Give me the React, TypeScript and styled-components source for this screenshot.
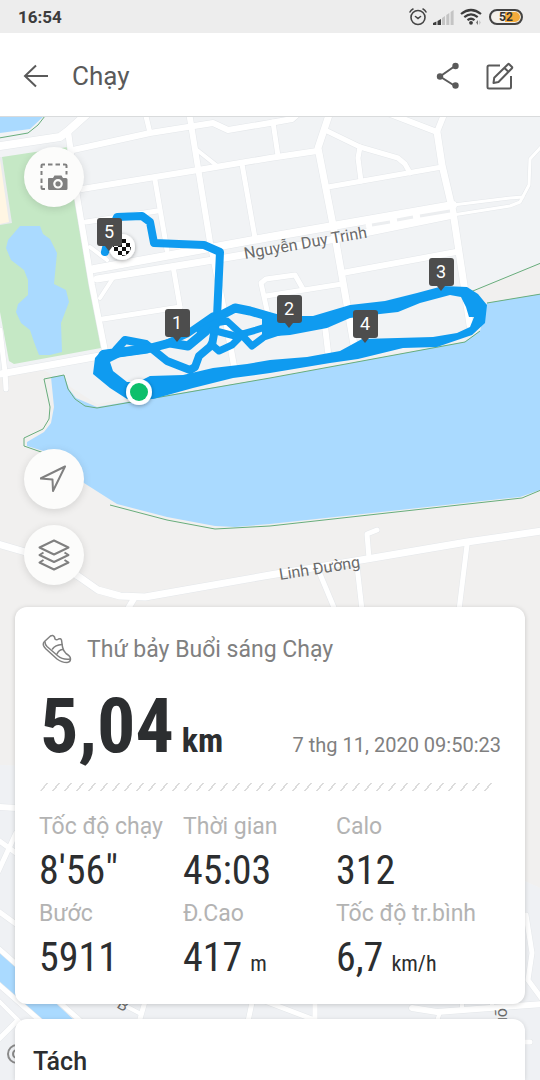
import React from "react";
import styled, { createGlobalStyle } from "styled-components";

const GlobalStyle = createGlobalStyle`
  *, *::before, *::after { box-sizing: border-box; }
  body {
    margin: 0;
    background: #eef0f3;
    color: #2c2e30;
    font-family: Roboto, "Noto Sans", sans-serif;
  }
`;

const condensed = `"Roboto Condensed", "Liberation Sans Narrow", Roboto, sans-serif`;

const Page = styled.div`
  display: flex;
  flex-direction: column;
  min-height: 100vh;
`;

const StatusBar = styled.div`
  display: flex;
  align-items: center;
  justify-content: space-between;
  height: 33px;
  padding: 0 17px 0 18px;
  background: #ededed;
  color: #3c3c3c;
`;

const Clock = styled.time`
  font-size: 17px;
  font-weight: 700;
  line-height: 20px;
`;

const StatusIcons = styled.div`
  display: flex;
  align-items: center;
  gap: 6px;

  svg { display: block; }
`;

const Battery = styled.span`
  width: 34px;
  height: 16px;
  border: 2px solid #444;
  border-radius: 8px;
  background: linear-gradient(90deg, #f5f1ea 0 14px, #f4ab3c 14px);
  box-shadow: inset 0 0 0 1px #ededed;
  color: #333;
  font-size: 12px;
  font-weight: 700;
  line-height: 12px;
  text-align: center;
`;

const AppBar = styled.header`
  display: flex;
  align-items: center;
  height: 84px;
  padding: 2px 24px 0 20px;
  border-bottom: 1px solid #d9dbdc;
  background: #fff;
`;

const Title = styled.h1`
  flex: 1;
  margin: 0 0 0 20px;
  color: #5a5a5a;
  font-size: 26px;
  font-weight: 400;
  line-height: 32px;
`;

const IconButton = styled.button`
  display: grid;
  place-items: center;
  width: 32px;
  height: 32px;
  padding: 0;
  border: 0;
  background: none;
  color: #5a5a5a;

  & + & { margin-left: 20px; }
`;

const Activity = styled.main`
  position: relative;
  display: flex;
  flex: 1;
  flex-direction: column;
  overflow: hidden;
`;

const MapCanvas = styled.svg`
  position: absolute;
  inset: 0;
  width: 100%;
  height: 100%;
`;

const MapTools = styled.div`
  position: relative;
  display: flex;
  flex-direction: column;
  align-items: flex-start;
  justify-content: space-between;
  height: 490px;
  padding: 30px 24px 22px;
`;

const ToolGroup = styled.div`
  display: flex;
  flex-direction: column;
  gap: 16px;
`;

const RoundButton = styled.button`
  display: grid;
  place-items: center;
  width: 60px;
  height: 60px;
  padding: 0;
  border: 0;
  border-radius: 50%;
  background: #fcfcfb;
  box-shadow: 0 2px 8px rgba(0, 0, 0, 0.12);
  color: #808080;
`;

const Cards = styled.div`
  position: relative;
  display: flex;
  flex: 1;
  flex-direction: column;
  gap: 15px;
  padding: 0 15px;
`;

const SummaryCard = styled.section`
  padding: 24px 24px 19px;
  border-radius: 12px;
  background: #fff;
  box-shadow: 0 1px 5px rgba(0, 0, 0, 0.18);
`;

const SplitsCard = styled.section`
  flex: 1;
  padding: 27px 18px 0;
  border-radius: 12px 12px 0 0;
  background: #fff;
  box-shadow: 0 1px 5px rgba(0, 0, 0, 0.14);
`;

const SplitsTitle = styled.h2`
  margin: 0;
  font-size: 25px;
  font-weight: 500;
  line-height: 32px;
`;

const WorkoutName = styled.h2`
  display: flex;
  align-items: center;
  gap: 15px;
  height: 36px;
  margin: 0 0 15px 3px;
  color: #808080;
  font-size: 23px;
  font-weight: 400;
`;

const DistanceRow = styled.div`
  display: flex;
  align-items: baseline;
  justify-content: space-between;
  height: 88px;
`;

const Distance = styled.p`
  margin: 0 0 0 1px;
  font-family: ${condensed};
  font-size: 76px;
  font-weight: 700;
  line-height: 88px;
`;

const DistanceUnit = styled.span`
  margin-left: 8px;
  font-size: 34px;
  line-height: 40px;
`;

const StartDate = styled.time`
  color: #808080;
  font-size: 20px;
  line-height: 24px;
`;

const Stripes = styled.hr`
  height: 8px;
  margin: 13px 4px 20px;
  border: 0;
  background: repeating-linear-gradient(90deg, #dcdcdc 0 2px, transparent 2px 12px);
  transform: skewX(-37deg);
`;

const Stats = styled.dl`
  display: grid;
  grid-template-columns: 48fr 51fr 55fr;
  margin: 0;
`;

const StatLabel = styled.dt`
  color: #b3b3b3;
  font-size: 23px;
  line-height: 32px;
  white-space: nowrap;
`;

const StatValue = styled.dd`
  margin: 0;
  font-family: ${condensed};
  font-size: 40px;
  line-height: 55px;
  white-space: nowrap;
`;

const StatUnit = styled.span`
  margin-left: 8px;
  font-size: 22px;
  line-height: 24px;
`;

const stats = [
  { label: "Tốc độ chạy", value: "8'56\"" },
  { label: "Thời gian", value: "45:03" },
  { label: "Calo", value: "312" },
  { label: "Bước", value: "5911" },
  { label: "Đ.Cao", value: "417", unit: "m" },
  { label: "Tốc độ tr.bình", value: "6,7", unit: "km/h" },
];

const streets: [number, string][] = [
  [8, "M0 146 L60 137 L68 131 L88 113"],
  [6, "M68 131 L76 190 L92 285 L106 356"],
  [6, "M73 150 L150 133 L213 123 L228 130 L270 123 L292 119 L300 112"],
  [5, "M145 112 L150 133"],
  [6, "M189 112 L210 242 L222 300 L234 366"],
  [4, "M197 150 L216 165"],
  [6, "M82 189 L198 170 L270 158 L317 151"],
  [5, "M155 180 L167 250"],
  [5, "M242 164 L255 238"],
  [5, "M86 222 L157 211"],
  [8, "M94 269 L270 237 L453 205"],
  [7, "M97 279 L213 260 L330 240 L453 215"],
  [4, "M90 247 L107 260"],
  [3, "M453 205 L510 198 L523 197"],
  [3, "M453 215 L510 206 L520 202 L529 185 L530 159 L541 147"],
  [7, "M330 112 L318 148 L333 225 L343 282 L354 345"],
  [5, "M273 122 L278 156"],
  [5, "M325 130 L360 147 L398 158 L405 164 L410 173"],
  [5, "M360 147 L358 158 L361 181"],
  [5, "M328 187 L442 167"],
  [6, "M385 112 L437 132 L445 112"],
  [7, "M437 132 L442 165 L453 212 L464 285 L470 325"],
  [6, "M342 273 L456 252"],
  [5, "M268 315 L261 283 L266 279 L295 275 L303 289"],
  [5, "M266 296 L342 284"],
  [5, "M173 266 L180 307"],
  [5, "M103 319 L180 307"],
  [4, "M113 278 L100 298"],
  [6, "M325 326 L328 352"],
  [7, "M0 374 L105 355"],
  [5, "M0 330 L5 372 L6 389"],
  [7, "M-2 544 L22 551 L54 560 L78 576 L98 590 L120 596 L145 597 L270 575 L367 559 L467 542 L542 531"],
  [5, "M369 558 L367 534 L377 530"],
  [5, "M320 574 L335 610"],
  [5, "M357 566 L362 610"],
  [5, "M467 545 L459 610"],
  [6, "M135 597 L126 612"],
  [6, "M-2 807 L16 808"],
  [5, "M-2 840 L16 853"],
  [5, "M-2 872 L16 833"],
  [5, "M-2 911 L16 924"],
  [5, "M-2 948 L84 1024"],
  [5, "M-2 984 L46 1026"],
  [4, "M-2 1000 L24 1026"],
  [5, "M-2 1040 L16 1022"],
  [5, "M146 998 L138 1026"],
  [4, "M118 1002 L141 1014"],
  [5, "M253 998 L247 1026"],
  [5, "M262 1000 L312 1019"],
  [5, "M315 998 L315 1026"],
  [6, "M412 1008 L437 1012 L542 1004"],
  [4, "M440 1012 L436 1024"],
  [4, "M462 998 L462 1010"],
  [4, "M492 998 L492 1008"],
  [5, "M526 915 L532 953 L528 980 L542 999"],
  [5, "M520 1042 L530 1042"],
];

const shoreline = [
  "M24 446 L24 438 L43 429 L49 419 L50 407 L44 379 L64 375 L68 389 L75 399 L85 406 L97 408 L270 378 L465 342 L480 331",
  "M24 446 L44 453",
  "M110 505 L167 520 L215 529 L270 526 L522 498 L541 490",
  "M468 293 L541 263",
  "M487 303 L541 294",
  "M-1 138 L28 133 L38 125 L45 116",
];

const routeLines: [number, string][] = [
  [8, "M105 252 L109 236 L117 217 L142 216 L150 222 L154 243 L204 245 L220 252 L217 317 L212 345 L199 356 L195 367 L190 370 L167 361 L146 344 L125 340 L116 350"],
  [9, "M103 355 L147 349 L170 343 L188 346 L206 331 L216 318 L235 308 L250 311 L278 319"],
  [7, "M165 344 L187 334 L213 316"],
  [7, "M200 331 L215 323 L227 321 L239 332 L252 346 L264 337 L285 330"],
  [7, "M212 330 L235 336 L256 330 L285 321"],
  [7, "M211 344 L219 351 L232 345 L243 334"],
];

const pins = [
  { n: 1, x: 177, y: 342 },
  { n: 2, x: 289, y: 328 },
  { n: 3, x: 441, y: 291 },
  { n: 4, x: 365, y: 343 },
  { n: 5, x: 109, y: 251 },
];

function RouteMap() {
  return (
    <MapCanvas viewBox="0 117 540 963" preserveAspectRatio="xMidYMin slice" role="img" aria-label="Run route map">
      <defs>
        <pattern id="checker" width="8" height="8" x="122" y="247" patternUnits="userSpaceOnUse">
          <rect width="8" height="8" fill="#fff" />
          <path d="M0 0h4v4h-4z M4 4h4v4h-4z" fill="#111" />
        </pattern>
        <filter id="lift" x="-50%" y="-50%" width="200%" height="200%">
          <feDropShadow dx="0" dy="1" stdDeviation="2" floodOpacity="0.35" />
        </filter>
      </defs>

      <rect y="117" width="540" height="963" fill="#f1f3f5" />
      <path d="M0 376 L44 370 L97 404 L465 340 L470 292 L540 263 V888 L300 780 L0 765z" fill="#f1f0ef" />
      <path d="M0 765 L300 780 L540 888 V1080 H0z" fill="#eff1f4" />
      <path d="M0 157 L2 157 L14 226 L0 226z" fill="#e9ebed" />
      <path d="M0 160 L9 222 L0 224z" fill="#fff6e3" />
      <path d="M2 157 L68 147 L76 190 L101 348 L14 364 L9 361 L0 312 V225 L12 223z" fill="#c5e8c5" />
      <path
        d="M20 226 L40 226 L43 234 L50 239 L57 253 L54 284 L66 290 L69 302 L61 323 L62 352 L50 355 L39 355 L34 342 L30 330 L21 323 L16 312 L18 304 L28 295 L28 280 L24 270 L11 260 L6 248 L8 240z"
        fill="#aadaff"
      />
      <path d="M0 116 H44 L30 129 L0 133z" fill="#aadaff" />
      <path
        d="M51 377 L64 375 L69 389 L76 398 L97 407 L270 378 L464 342 L480 331 L487 303 L540 294 V490 L520 497 L270 524 L235 527 L215 526 L167 517 L117 504 L84 483 L50 453 L27 446 V442 L44 432 L51 423 L54 407z"
        fill="#aadaff"
      />
      <path d="M0 951 L75 1021 H40 L0 986z" fill="#aadaff" />

      <g fill="none" stroke="#e4e7ea" strokeLinejoin="round" strokeLinecap="round">
        {streets.map(([w, d]) => <path key={d} d={d} strokeWidth={w + 1} />)}
      </g>
      <g fill="none" stroke="#fff" strokeLinejoin="round" strokeLinecap="round">
        {streets.map(([w, d]) => <path key={d} d={d} strokeWidth={w} />)}
        <path d="M366 226 L453 210" strokeWidth="14" strokeLinecap="butt" />
      </g>
      <path d="M372 225 L390 222 M397 220 L413 217 M420 216 L450 211" stroke="#eceef0" strokeWidth="3" />
      <g fill="none" stroke="#68ad7c" strokeWidth="1">
        {shoreline.map((d) => <path key={d} d={d} />)}
      </g>

      <g fill="#6b6b6b" fontSize="16">
        <text x="245" y="259" transform="rotate(-10 245 259)">Nguyễn Duy Trinh</text>
        <text x="280" y="580" transform="rotate(-9 280 580)">Linh Đường</text>
        <text x="116" y="1007" transform="rotate(32 116 1007)">B</text>
        <text x="507" y="1026" transform="rotate(-90 507 1026)">uõ</text>
      </g>
      <g fill="none" stroke="#8a8a8a" strokeWidth="2">
        <circle cx="17" cy="1054" r="9" />
        <circle cx="17" cy="1054" r="4" />
      </g>

      <g fill="none" stroke="#0f9bf0" strokeLinejoin="round" strokeLinecap="round">
        {routeLines.map(([w, d]) => <path key={d} d={d} strokeWidth={w} />)}
      </g>
      <path
        d="M262 314 L283 316 L313 316 L350 305 L385 301 L417 293 L443 286 L467 287 L478 294 L487 305 L485 323 L472 335 L437 347 L403 348 L358 359 L330 363 L270 373 L233 378 L193 388 L153 399 L127 399 L110 388 L93 374 L95 358 L102 350 L147 344 L147 353 L120 357 L110 362 L113 371 L127 382 L138 382 L150 376 L183 375 L213 368 L247 364 L270 360 L307 357 L340 351 L362 339 L433 337 L457 333 L470 327 L474 317 L469 317 L466 307 L461 297 L450 295 L420 303 L398 312 L380 314 L350 318 L327 328 L290 335 L262 337z"
        fill="#0f9bf0"
      />

      <g filter="url(#lift)">
        <circle cx="122" cy="247" r="13" fill="#fff" />
        <circle cx="139" cy="392" r="13" fill="#fff" />
      </g>
      <circle cx="122" cy="247" r="9" fill="url(#checker)" />
      <circle cx="139" cy="392" r="9" fill="#0dbf6b" />

      {pins.map(({ n, x, y }) => (
        <g key={n} transform={`translate(${x} ${y})`}>
          <rect x="-12" y="-33" width="25" height="28" rx="3" fill="#4d4d4d" />
          <path d="M-4 -5 H4 L0 0z" fill="#4d4d4d" />
          <text y="-13" fill="#fff" fontSize="18" textAnchor="middle">{n}</text>
        </g>
      ))}
    </MapCanvas>
  );
}

const AlarmIcon = () => (
  <svg width="18" height="18" viewBox="0 0 18 18" fill="none" stroke="#444" strokeWidth="1.6" strokeLinecap="round">
    <circle cx="9" cy="9.5" r="7" />
    <path d="M6.5 8.5 L9 10.5 L11.5 8.5 M1 4 Q2 2 4 1 M17 4 Q16 2 14 1" />
  </svg>
);

const SignalIcon = () => (
  <svg width="21" height="16" viewBox="0 0 21 16">
    <path d="M0 16 V14 L3.4 12.5 V16z M4.5 16 V12 L8 10 V16z" fill="#3c3c3c" />
    <path d="M9 16 V9 L12 7 V16z M13.3 16 V6 L16.3 4 V16z M17.6 16 V3 L20.6 1 V16z" fill="#c4c4c4" />
  </svg>
);

const WifiIcon = () => (
  <svg width="23" height="18" viewBox="0 0 23 18" fill="none" stroke="#3c3c3c" strokeWidth="2.2">
    <path d="M1 6 Q11 -2 21 6 M4.3 9.2 Q11 3.6 17.7 9.2 M7.5 12.2 Q11 9.3 14.5 12.2" />
    <circle cx="11" cy="14.8" r="1.9" fill="#3c3c3c" stroke="none" />
    <path d="M18 12 L16 14.5 L18 17z" fill="#777" stroke="none" />
    <path d="M19 12 L21 14.5 L19 17z" fill="#ccc" stroke="none" />
  </svg>
);

const BackIcon = () => (
  <svg width="26" height="24" viewBox="0 0 26 24" fill="none" stroke="currentColor" strokeWidth="2">
    <path d="M25 12 H2 M13 1.5 L2 12 L13 22.5" />
  </svg>
);

const ShareIcon = () => (
  <svg width="24" height="28" viewBox="0 0 24 28">
    <path d="M19 4 L4 14.5 L19 24" fill="none" stroke="currentColor" strokeWidth="2" />
    <g fill="currentColor">
      <circle cx="19.5" cy="4" r="3.2" />
      <circle cx="4" cy="14.5" r="3.2" />
      <circle cx="19.5" cy="23.5" r="3.2" />
    </g>
  </svg>
);

const EditIcon = () => (
  <svg width="28" height="28" viewBox="0 0 28 28" fill="none" stroke="currentColor" strokeWidth="2" strokeLinejoin="round">
    <path d="M14 3.5 H3 Q1.5 3.5 1.5 5 V25 Q1.5 26.5 3 26.5 H23.5 Q25 26.5 25 25 V14" />
    <path d="M7.5 21 L8.2 15.8 L22 2.2 Q22.6 1.6 23.2 2.2 L26 5 Q26.6 5.6 26 6.2 L12.5 20 Z M18.5 6 L22.4 9.8" />
  </svg>
);

const CaptureIcon = () => (
  <svg width="28" height="28" viewBox="0 0 28 28">
    <path
      d="M1.5 5 V2.5 Q1.5 1.5 2.5 1.5 H5 M8 1.5 H12.5 M15.5 1.5 H20 M23 1.5 H25 Q26.5 1.5 26.5 2.5 V5 M26.5 8 V11.5 M1.5 8 V12 M1.5 15.5 V20 M1.5 22.5 V25 Q1.5 26 2.5 26 H5"
      fill="none" stroke="currentColor" strokeWidth="2"
    />
    <path fillRule="evenodd" fill="currentColor" d="M8.5 15 H13 L14.5 12.5 H21.5 L23 15 H26 Q27.5 15 27.5 16.5 V25.5 Q27.5 27 26 27 H9.5 Q8 27 8 25.5 V16.5 Q8 15 8.5 15z M18 16 A4.8 4.8 0 1 0 18 25.6 A4.8 4.8 0 1 0 18 16z" />
    <circle cx="18" cy="20.8" r="2.6" fill="currentColor" />
  </svg>
);

const LocateIcon = () => (
  <svg width="28" height="28" viewBox="0 0 28 28" fill="none" stroke="currentColor" strokeWidth="2" strokeLinejoin="round">
    <path d="M25 1.5 L0.5 13.5 L12.5 14.5 L13 26z" />
  </svg>
);

const LayersIcon = () => (
  <svg width="32" height="32" viewBox="0 0 32 32" fill="none" stroke="currentColor" strokeWidth="2" strokeLinejoin="round">
    <path d="M16 1.5 L30.5 8.5 L16 15.5 L1.5 8.5z" />
    <path d="M5.5 13.5 L1.5 16 L16 23 L30.5 16 L26.5 13.5 M5.5 21 L1.5 23.5 L16 30.5 L30.5 23.5 L26.5 21" />
  </svg>
);

const ShoeIcon = () => (
  <svg width="30" height="30" viewBox="0 0 30 30" fill="none" stroke="currentColor" strokeWidth="1.5" strokeLinejoin="round" strokeLinecap="round">
    <path d="M2.5 7.5 Q0.8 9 1.5 11.5 Q2 13 4 15 L15 25 Q19.5 28.5 25 28.5 Q28.5 28 28.5 25 Q28.5 22 24 19.5 Q21.5 17.5 20.5 13 L19.5 6 Q18.5 4 16.5 5 Q14.5 6.5 13 5 L12.5 3 Q11 0.5 8.5 2 Z" />
    <path d="M3 8 Q3 10.5 5 12.5 L16 22 Q20.5 26 28.3 25 M10.5 15 Q13 11 20 10.5 M15 20 Q17 15.5 21 15.5" />
  </svg>
);

export default function App() {
  return (
    <Page>
      <GlobalStyle />
      <StatusBar>
        <Clock>16:54</Clock>
        <StatusIcons>
          <AlarmIcon />
          <SignalIcon />
          <WifiIcon />
          <Battery>52</Battery>
        </StatusIcons>
      </StatusBar>
      <AppBar>
        <IconButton aria-label="Back"><BackIcon /></IconButton>
        <Title>Chạy</Title>
        <IconButton aria-label="Share"><ShareIcon /></IconButton>
        <IconButton aria-label="Edit"><EditIcon /></IconButton>
      </AppBar>
      <Activity>
        <RouteMap />
        <MapTools>
          <RoundButton aria-label="Capture map"><CaptureIcon /></RoundButton>
          <ToolGroup>
            <RoundButton aria-label="Center on route"><LocateIcon /></RoundButton>
            <RoundButton aria-label="Map layers"><LayersIcon /></RoundButton>
          </ToolGroup>
        </MapTools>
        <Cards>
          <SummaryCard>
            <WorkoutName>
              <ShoeIcon />
              Thứ bảy Buổi sáng Chạy
            </WorkoutName>
            <DistanceRow>
              <Distance>5,04<DistanceUnit>km</DistanceUnit></Distance>
              <StartDate dateTime="2020-11-07T09:50:23">7 thg 11, 2020 09:50:23</StartDate>
            </DistanceRow>
            <Stripes />
            <Stats>
              {stats.map(({ label, value, unit }) => (
                <div key={label}>
                  <StatLabel>{label}</StatLabel>
                  <StatValue>
                    {value}
                    {unit && <StatUnit>{unit}</StatUnit>}
                  </StatValue>
                </div>
              ))}
            </Stats>
          </SummaryCard>
          <SplitsCard>
            <SplitsTitle>Tách</SplitsTitle>
          </SplitsCard>
        </Cards>
      </Activity>
    </Page>
  );
}
